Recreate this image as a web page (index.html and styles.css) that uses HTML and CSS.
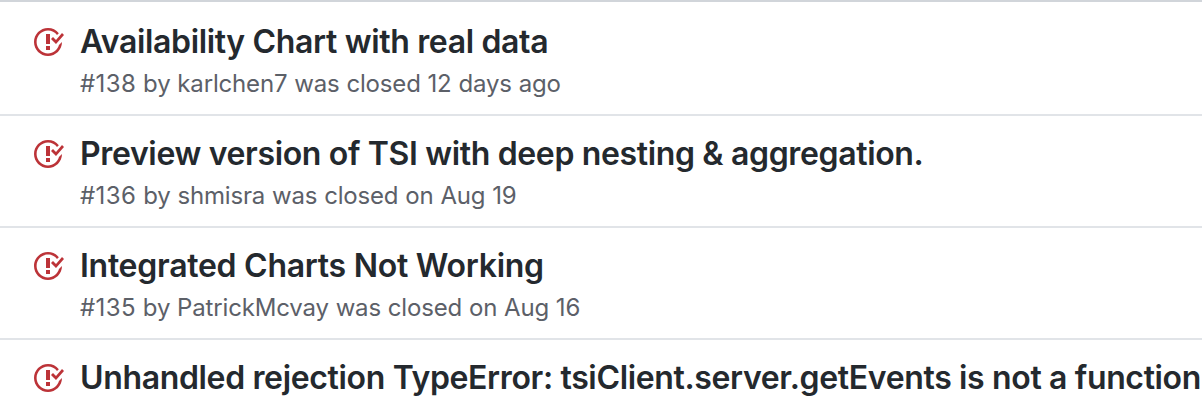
FILE: index.html
```html
<!DOCTYPE html>
<html lang="en">
<head>
<meta charset="utf-8">
<title>Issues</title>
<link rel="stylesheet" href="styles.css">
</head>
<body>
<svg class="defs" aria-hidden="true"><symbol id="issue-closed" viewBox="0 0 16 16"><path d="M7 10h2v2H7v-2zm2-6H7v5h2V4zm1.500 1.500l-1 1L12 9l4-4.500-1-1L12 7l-1.500-1.500zM8 13.700A5.710 5.710 0 0 1 2.300 8c0-3.140 2.560-5.700 5.700-5.700 1.830 0 3.450.880 4.500 2.200l.920-.920A6.947 6.947 0 0 0 8 1C4.140 1 1 4.140 1 8s3.140 7 7 7 7-3.140 7-7l-1.520 1.520c-.660 2.410-2.860 4.190-5.480 4.190v-.010z"/></symbol></svg>
<ul class="issues">
<li class="issue"><svg class="icon"><use href="#issue-closed"/></svg><div class="content"><h2 class="title">Availability Chart with real data</h2><p class="meta"><span class="number">#138</span> by karlchen7 was closed 12 days ago</p></div></li>
<li class="issue"><svg class="icon"><use href="#issue-closed"/></svg><div class="content"><h2 class="title">Preview version of TSI with deep nesting &amp; aggregation.</h2><p class="meta"><span class="number">#136</span> by shmisra was closed on Aug 19</p></div></li>
<li class="issue"><svg class="icon"><use href="#issue-closed"/></svg><div class="content"><h2 class="title title-wide">Integrated Charts Not Working</h2><p class="meta"><span class="number">#135</span> by PatrickMcvay was closed on Aug 16</p></div></li>
<li class="issue"><svg class="icon"><use href="#issue-closed"/></svg><div class="content"><h2 class="title">Unhandled rejection TypeError: tsiClient.server.getEvents is not a function</h2></div></li>
</ul>
</body>
</html>
```

FILE: styles.css
```css
body { margin: 0; background: #fff; font-family: Inter, "Liberation Sans", sans-serif; overflow: hidden; }
.defs { display: none; }
.issues { list-style: none; margin: 0; padding: 0; height: 400px; overflow: hidden; }
.issue { display: flex; box-sizing: border-box; height: 112px; border-top: 2px solid #e1e4e8; padding: 16px 0 0 32px; }
.issue:first-child { height: 114px; padding-top: 18px; border-top-color: #d1d5da; }
.icon { flex: none; width: 32px; height: 32px; margin: 6px 16px 0 0; fill: #bc3338; }
.content { white-space: nowrap; }
.title { margin: 0; font-size: 32px; line-height: 44px; font-weight: 600; color: #24292e; letter-spacing: -0.35px; }
.title-wide { letter-spacing: -0.27px; }
.meta { margin: 2px 0 0; font-size: 24px; line-height: 36px; color: #5c6068; letter-spacing: -0.17px; word-spacing: 0.3px; }
.number { letter-spacing: 0.4px; }
```
